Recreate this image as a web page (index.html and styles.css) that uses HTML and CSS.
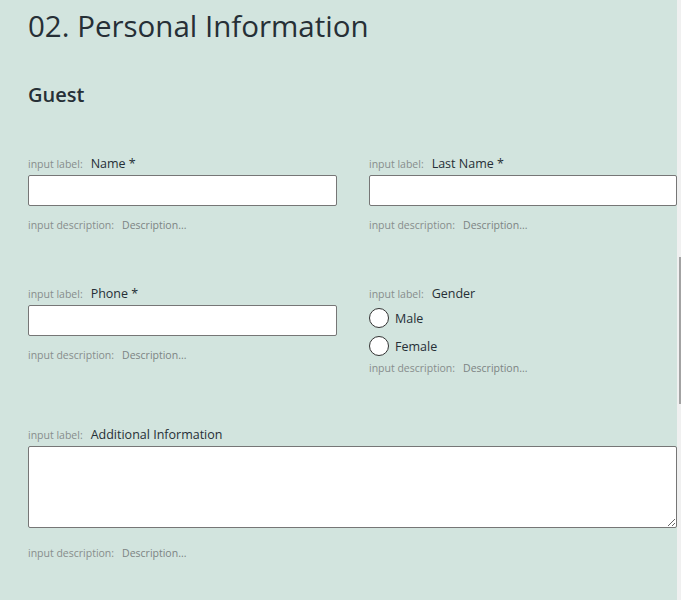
FILE: index.html
```html
<!DOCTYPE html>
<html lang="en">
<head>
<meta charset="UTF-8" />
<meta name="viewport" content="width=device-width, initial-scale=1" />
<title>Personal Information</title>
<link rel="stylesheet" href="styles.css">
</head>
<body>

<div class="page">
  <main class="form">
    <h1>02. Personal Information</h1>
    <h2>Guest</h2>

    <div class="row first">
      <div class="field">
        <div class="label-row"><span class="meta">input label:</span><label>Name *</label></div>
        <input type="text" class="text-input" />
        <div class="desc-row"><span class="meta">input description:</span><span class="desc">Description...</span></div>
      </div>
      <div class="field">
        <div class="label-row"><span class="meta">input label:</span><label>Last Name *</label></div>
        <input type="text" class="text-input" />
        <div class="desc-row"><span class="meta">input description:</span><span class="desc">Description...</span></div>
      </div>
    </div>

    <div class="row">
      <div class="field">
        <div class="label-row"><span class="meta">input label:</span><label>Phone *</label></div>
        <input type="text" class="text-input" />
        <div class="desc-row"><span class="meta">input description:</span><span class="desc">Description...</span></div>
      </div>
      <div class="field">
        <div class="label-row"><span class="meta">input label:</span><label>Gender</label></div>
        <div class="radios">
          <label class="radio"><span class="circle"></span>Male</label>
          <label class="radio"><span class="circle"></span>Female</label>
        </div>
        <div class="desc-row tight"><span class="meta">input description:</span><span class="desc">Description...</span></div>
      </div>
    </div>

    <div class="row single">
      <div class="field">
        <div class="label-row"><span class="meta">input label:</span><label>Additional Information</label></div>
        <textarea class="text-area"></textarea>
        <div class="desc-row loose"><span class="meta">input description:</span><span class="desc">Description...</span></div>
      </div>
    </div>
  </main>

  <div class="scrollbar"><div class="thumb"></div></div>
</div>

</body>
</html>
```

FILE: styles.css
```css
/* Base */
body, html {
  margin: 0; padding: 0; height: 100%;
  background: #d2e4de;
  font-family: "Open Sans", "Noto Sans", Arial, sans-serif;
  color: #262f36;
  overflow: hidden;
}

.page {
  display: flex;
  height: 600px;
}

/* Form column */
.form {
  width: 677px;
  box-sizing: border-box;
  padding-left: 28px;
}

h1 {
  margin: 0;
  padding-top: 6px;
  font-size: 29.5px;
  line-height: 40px;
  font-weight: 400;
}

h2 {
  margin: 0;
  margin-top: 34px;
  font-size: 20px;
  line-height: 30px;
  font-weight: 600;
}

/* Rows of fields */
.row {
  display: grid;
  grid-template-columns: 309px 308px;
  column-gap: 32px;
  align-items: start;
  margin-top: 51px;
}
.row.first { margin-top: 45px; }
.row.single {
  grid-template-columns: 649px;
  margin-top: 49px;
}

.field {
  display: flex;
  flex-direction: column;
}

.label-row, .desc-row {
  display: flex;
  align-items: baseline;
  gap: 8px;
  height: 18px;
  line-height: 18px;
}
.desc-row { margin-top: 10px; }
.desc-row.tight { margin-top: 1px; }
.desc-row.loose { margin-top: 16px; }

.meta {
  font-size: 10.5px;
  color: #878d8c;
}
.label-row label {
  font-size: 12.5px;
  color: #262f36;
}
.desc {
  font-size: 10.5px;
  color: #7c8383;
}

/* Inputs */
.text-input {
  margin: 2px 0 0 0;
  height: 31px;
  box-sizing: border-box;
  border: 1px solid #767676;
  border-radius: 2px;
  background: #fff;
}

.text-area {
  margin: 2px 0 0 0;
  height: 82px;
  box-sizing: border-box;
  border: 1px solid #767676;
  border-radius: 2px;
  background: #fff;
  resize: vertical;
}

/* Radios */
.radios {
  display: flex;
  flex-direction: column;
  gap: 4px;
  margin-top: 3px;
}
.radio {
  display: flex;
  align-items: center;
  gap: 6px;
  height: 24px;
  font-size: 12.5px;
  color: #262f36;
}
.circle {
  width: 18px;
  height: 18px;
  border: 1px solid #333;
  border-radius: 50%;
  background: #fff;
}

/* Scrollbar strip */
.scrollbar {
  width: 4px;
  background: #f0f0f0;
  position: relative;
}
.thumb {
  position: absolute;
  right: 0;
  top: 257px;
  width: 2px;
  height: 147px;
  background: #a3a3a3;
}
```
